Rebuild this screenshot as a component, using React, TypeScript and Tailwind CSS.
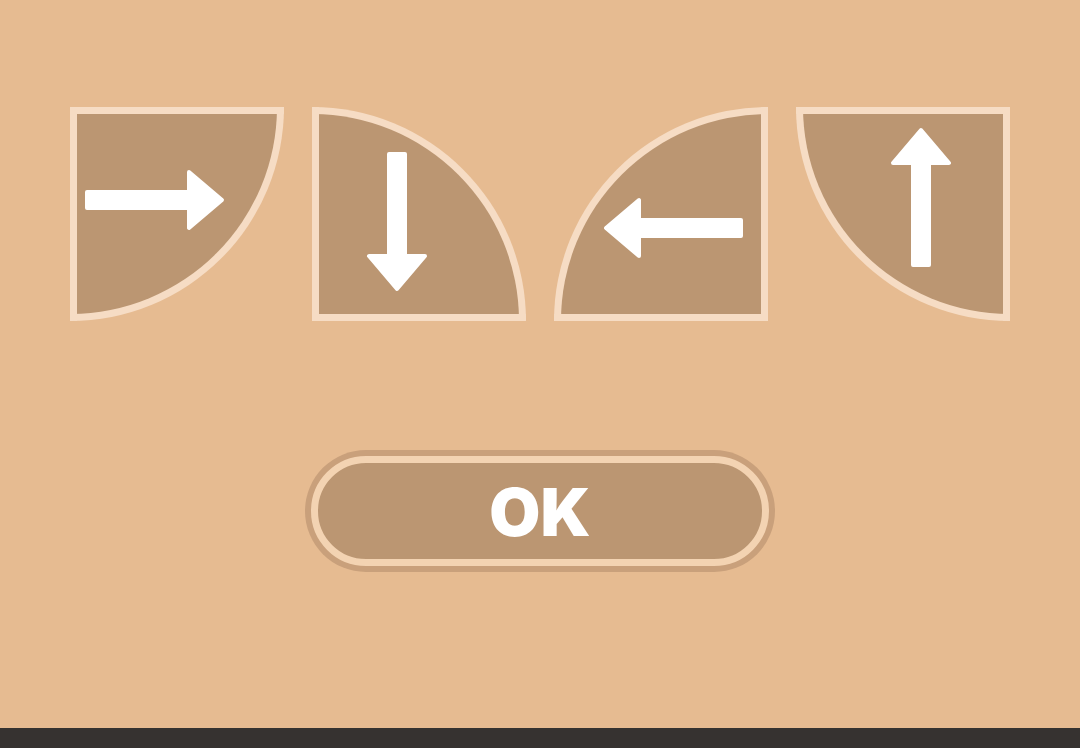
const tiles = [
  { corner: 'rounded-br-[214px]', t: 'translate(8,86) rotate(0)' },
  { corner: 'rounded-tr-[214px]', t: 'translate(78,38) rotate(90)' },
  { corner: 'rounded-tl-[214px]', t: 'translate(182,114) rotate(180)' },
  { corner: 'rounded-bl-[214px]', t: 'translate(118,153) rotate(-90)' },
];

// arrow drawn pointing right from its tail at the origin
const Arrow = ({ transform }: { transform: string }) => (
  <svg className="h-full w-full" viewBox="0 0 200 200">
    <polygon
      transform={transform}
      points="2,-8 104,-8 104,-28 137,0 104,28 104,8 2,8"
      fill="#ffffff"
      stroke="#ffffff"
      strokeWidth={4}
      strokeLinejoin="round"
    />
  </svg>
);

export default function App() {
  return (
    <div className="flex h-[748px] w-[1080px] flex-col bg-[#e6bb91]" style={{ fontFamily: '"Liberation Sans", Arial, sans-serif' }}>
      <div className="flex flex-1 flex-col items-center pt-[107px]">
        <div className="flex gap-[28px]">
          {tiles.map((tile, i) => (
            <div
              key={i}
              className={`h-[214px] w-[214px] border-[7px] border-[#f6dcc4] bg-[#bb9672] ${tile.corner}`}
            >
              <Arrow transform={tile.t} />
            </div>
          ))}
        </div>

        <div className="mt-[129px] h-[122px] w-[470px] rounded-full bg-[#c9a07b] p-[6px]">
          <button className="flex h-full w-full items-center justify-center rounded-full border-[7px] border-[#f3d3b2] bg-[#bb9672] pt-[2px]">
            <span className="font-['Inter',_'Liberation_Sans',_sans-serif] text-[66px] leading-none font-black tracking-[0px] text-white">OK</span>
          </button>
        </div>
      </div>
      <div className="h-[20px] bg-[#363230]" />
    </div>
  );
}
